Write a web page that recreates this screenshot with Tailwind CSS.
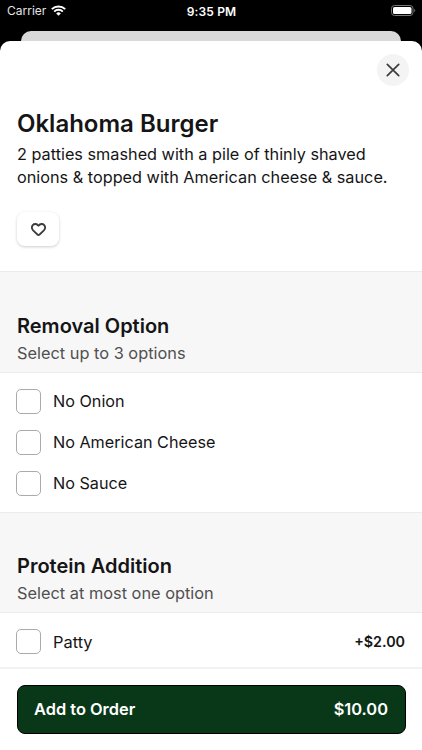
<!DOCTYPE html>
<html lang="en">
<head>
<meta charset="utf-8">
<title>Oklahoma Burger</title>
<script src="https://cdn.jsdelivr.net/npm/@tailwindcss/browser@4"></script>
</head>
<body class="bg-black">
<div class="flex h-[750px] w-[422px] flex-col overflow-hidden bg-black font-['Inter',sans-serif] text-[#151515]">
  <header class="grid h-[31px] shrink-0 grid-cols-3 items-start pt-[3px] pl-[7px] pr-[6px] text-white">
    <div class="flex items-center gap-[5px]">
      <span class="text-[12px] leading-4 text-[#e4e4e4]">Carrier</span>
      <svg class="mb-px h-[11px] w-[15px]" viewBox="0 0 15 11" fill="none" stroke="white" stroke-width="2"><path d="M.8 4.1a9.6 9.6 0 0 1 13.4 0M3.2 6.6a6.2 6.2 0 0 1 8.6 0"/><path d="M7.5 10.7 5.2 8.4a3.3 3.3 0 0 1 4.6 0Z" fill="white" stroke="none"/></svg>
    </div>
    <span class="pt-px text-center text-[12px] leading-4 font-semibold tracking-[0.15px]">9:35 PM</span>
    <svg class="mt-[2px] h-[11px] w-[25px] justify-self-end" viewBox="0 0 25 11" fill="none"><rect x=".5" y=".5" width="21.5" height="10" rx="3" stroke="#777"/><rect x="2" y="2" width="18.5" height="7" rx="1.6" fill="white"/><path d="M23.3 3.8v3.4c1.3-.5 1.3-2.9 0-3.4Z" fill="#777"/></svg>
  </header>
  <div class="mx-[21px] h-[10px] shrink-0 rounded-t-[10px] bg-[#d9d9d9]"></div>
  <main class="flex flex-1 flex-col rounded-t-[10px] bg-white">
    <section class="h-[230px] shrink-0 px-[17px] pt-[12.5px]">
      <div class="-mr-[4px] flex justify-end">
        <button class="flex size-[32px] items-center justify-center rounded-full bg-[#f4f4f4]" aria-label="Close">
          <svg class="size-[14px]" viewBox="0 0 14 14" fill="none" stroke="#3c3c3c" stroke-width="1.7" stroke-linecap="round"><path d="m1.3 1.3 11.4 11.4M12.7 1.3 1.3 12.7"/></svg>
        </button>
      </div>
      <h1 class="mt-[23.5px] text-[24px] leading-[30px] font-semibold">Oklahoma Burger</h1>
      <p class="mt-[4px] text-[16.25px] leading-[22.5px] whitespace-nowrap">2 patties smashed with a pile of thinly shaved<br>onions &amp; topped with American cheese &amp; sauce.</p>
      <button class="mt-[24px] flex h-[34px] w-[42px] items-center justify-center rounded-[8px] bg-white shadow-[0_1px_3px_rgba(0,0,0,0.2)]" aria-label="Favorite">
        <svg class="h-[13px] w-[15px]" viewBox="0 0 15 13" fill="none" stroke="#3c3c3c" stroke-width="1.8" stroke-linejoin="round"><path d="M7.5 2.7C5.9.6 3.2.5 1.8 2.1.5 3.8.9 6 2.1 7.3L6.4 11.5Q7.5 12.5 8.6 11.5L12.9 7.3C14.1 6 14.5 3.8 13.2 2.1 11.8.5 9.1.6 7.5 2.7Z"/></svg>
      </button>
    </section>
    <section class="h-[102px] shrink-0 border-y border-[#ececec] bg-[#f7f7f7] px-[17px] pt-[41px]">
      <h2 class="text-[20px] leading-[27px] font-semibold">Removal Option</h2>
      <p class="mt-px text-[16.35px] leading-[24px] text-[#505050]">Select up to 3 options</p>
    </section>
    <section class="flex h-[139px] shrink-0 flex-col gap-[16px] px-[16px] pt-[16px] text-[16.2px]">
      <div class="flex h-[25px] items-center gap-[12px]"><span class="size-[25px] rounded-[5px] border border-[#ababab]"></span><span>No Onion</span></div>
      <div class="flex h-[25px] items-center gap-[12px]"><span class="size-[25px] rounded-[5px] border border-[#ababab]"></span><span>No American Cheese</span></div>
      <div class="flex h-[25px] items-center gap-[12px]"><span class="size-[25px] rounded-[5px] border border-[#ababab]"></span><span class="-mt-px">No Sauce</span></div>
    </section>
    <section class="h-[101px] shrink-0 border-y border-[#ececec] bg-[#f7f7f7] px-[17px] pt-[40px]">
      <h2 class="text-[20px] leading-[27px] font-semibold">Protein Addition</h2>
      <p class="mt-px text-[16.35px] leading-[24px] text-[#505050]">Select at most one option</p>
    </section>
    <section class="flex h-[54px] shrink-0 items-center gap-[12px] pt-[3px] pr-[17px] pl-[16px] text-[16.4px]">
      <span class="size-[25px] rounded-[5px] border border-[#ababab]"></span><span class="pt-px">Patty</span>
      <span class="ml-auto text-[14.3px] font-semibold">+$2.00</span>
    </section>
    <footer class="flex-1 border-t-2 border-[#f3f3f3] px-[16.5px] pt-[15.5px]">
      <button class="flex h-[49px] w-full items-center justify-between rounded-[8px] border border-black bg-[#093819] px-[16.5px] text-[16.4px] font-semibold text-white"><span>Add to Order</span><span>$10.00</span></button>
    </footer>
  </main>
</div>
</body>
</html>
